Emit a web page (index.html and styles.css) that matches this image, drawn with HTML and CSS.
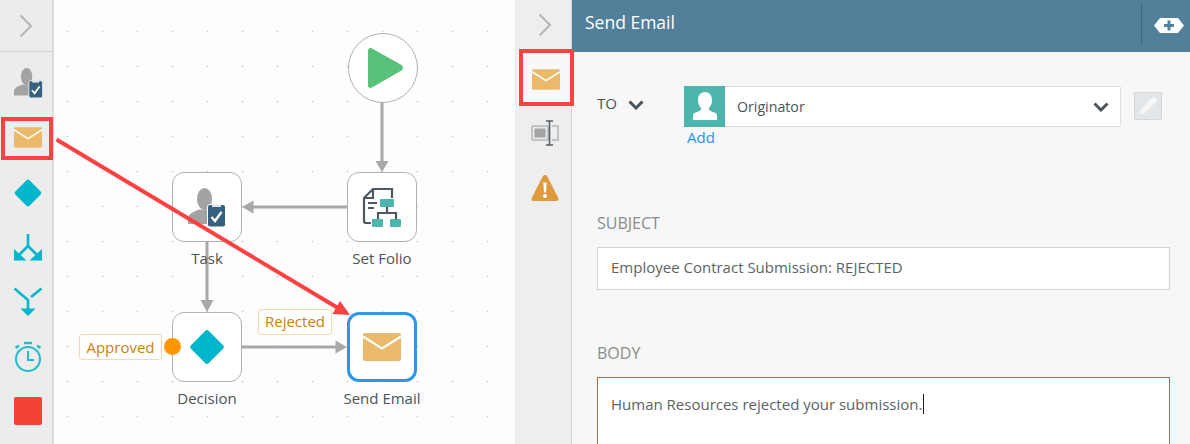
FILE: index.html
```html
<!DOCTYPE html>
<html lang="en">
<head>
<meta charset="utf-8">
<title>Send Email</title>
<link rel="stylesheet" href="styles.css">
</head>
<body>
<svg width="0" height="0" class="defs">
  <defs>
    <symbol id="mail" viewBox="0 0 38 28">
      <rect width="38" height="28" rx="2" fill="#ebb96a"/>
      <path d="M0 3.500 19 15.500 38 3.500" fill="none" stroke="#fff" stroke-width="2.200"/>
    </symbol>
    <symbol id="task" viewBox="0 0 38 39">
      <ellipse cx="16.500" cy="11" rx="7.500" ry="11" fill="#a3a3a3"/>
      <path d="M0 36v-6c0-3 4-6 11-8.500h11V36z" fill="#a3a3a3"/>
      <rect x="19.500" y="16.500" width="18" height="22.500" rx="2.500" fill="#35617f" stroke="#fff" stroke-width="1"/>
      <rect x="24" y="16.500" width="9" height="2.500" fill="#dfe6ea"/>
      <path d="M23.500 29l3.500 4 6.500-9" fill="none" stroke="#fff" stroke-width="2.400"/>
    </symbol>
    <symbol id="diamond" viewBox="0 0 36 36">
      <rect x="6" y="6" width="24" height="24" rx="2.500" transform="rotate(45 18 18)" fill="#00b6cb"/>
    </symbol>
  </defs>
</svg>
<div class="app">
  <aside class="rail rail-left">
    <div class="rail-head"><svg class="chev" width="14" height="24" viewBox="0 0 14 24"><path d="M1.500 1.500 12 12 1.500 22.500" fill="none" stroke="#b5b5b5" stroke-width="2"/></svg></div>
    <div class="rail-items">
      <div class="tool"><svg width="29" height="30"><use href="#task"/></svg></div>
      <div class="tool"><svg width="28" height="21"><use href="#mail"/></svg></div>
      <div class="tool"><svg width="30" height="30"><use href="#diamond"/></svg></div>
      <div class="tool"><svg width="30" height="30" viewBox="0 0 30 30"><g fill="none" stroke="#00b6cb" stroke-width="2.600"><path d="M15 2v12L6 23"/><path d="M15 14l9.500 9.500"/></g><g fill="#00b6cb"><path d="M1 17v11.500h12.500z"/><path d="M29 17v11.500H16.500z"/></g></svg></div>
      <div class="tool"><svg width="30" height="30" viewBox="0 0 30 30"><g fill="none" stroke="#00b6cb" stroke-width="2.600"><path d="M1.500 1.500 15 13v10"/><path d="M28.500 1.500 18 10"/></g><path d="M7.500 21.500h15L15 29z" fill="#00b6cb"/></svg></div>
      <div class="tool"><svg width="30" height="32" viewBox="0 0 30 32"><g fill="none" stroke="#21bccd" stroke-width="2"><circle cx="15" cy="18" r="12"/><path d="M15 10v9h6"/><path d="M11 2h8" stroke-width="2.400"/><path d="M2.500 7 6 4.500M27.500 7 24 4.500" stroke-width="2.400"/></g></svg></div>
      <div class="tool"><span class="stop"></span></div>
    </div>
  </aside>

  <main class="canvas">
    <svg class="wires" width="461" height="444" viewBox="54 0 461 444">
      <g stroke="#a8a8a8" stroke-width="3" fill="none">
        <path d="M382 101v60"/>
        <path d="M347 207H253"/>
        <path d="M207 242v60"/>
        <path d="M242 347h94"/>
      </g>
      <g fill="#a8a8a8">
        <path d="M375.500 161h13L382 172z"/>
        <path d="M242 207l11.500-6.500v13z"/>
        <path d="M200.500 300h13L207 312z"/>
        <path d="M347 347l-11.500-6.500v13z"/>
      </g>
    </svg>

    <div class="node start"><svg width="36" height="42" viewBox="0 0 36 42"><path d="M4 1.500 33.500 18c2 1.300 2 4.300 0 5.600L4 40.500c-2 1-4 0-4-2.500V4c0-2.500 2-3.500 4-2.500z" fill="#58c27d"/></svg></div>

    <div class="node box folio">
      <svg width="40" height="41" viewBox="0 0 40 41">
        <g fill="none" stroke="#4e5a60" stroke-width="2.200">
          <path d="M30 11V2H11L2 11v23q0 2 2 2h5"/><path d="M11 2v9H2"/>
          <path d="M6 16h9M6 21h6"/>
          <path d="M25 20v6M16 32v-6h18v6"/>
        </g>
        <g fill="#4db6ac"><rect x="18" y="12" width="14" height="8" rx="1"/><rect x="10" y="32" width="11" height="8" rx="1"/><rect x="28" y="32" width="11" height="8" rx="1"/></g>
      </svg>
    </div>
    <span class="node-label l-folio">Set Folio</span>

    <div class="node box task"><svg width="38" height="39"><use href="#task"/></svg></div>
    <span class="node-label l-task">Task</span>

    <div class="node box decision"><svg width="38" height="38"><use href="#diamond"/></svg></div>
    <span class="node-label l-decision">Decision</span>
    <span class="dot"></span>
    <span class="tag tag-approved">Approved</span>
    <span class="tag tag-rejected">Rejected</span>

    <div class="node box email"><svg width="38" height="28"><use href="#mail"/></svg></div>
    <span class="node-label l-email">Send Email</span>
  </main>

  <aside class="rail rail-mid">
    <div class="rail-head-mid"><svg width="14" height="24" viewBox="0 0 14 24"><path d="M1.500 1.500 12 12 1.500 22.500" fill="none" stroke="#b5b5b5" stroke-width="2"/></svg></div>
    <div class="mid-tool mid-mail"><svg width="28" height="21"><use href="#mail"/></svg></div>
    <div class="mid-tool mid-text"><svg width="28" height="26" viewBox="0 0 28 26"><rect x="1" y="6" width="16" height="14" rx="1" fill="#e8e8e8" stroke="#b5b5b5" stroke-width="1.500"/><rect x="3.500" y="8.500" width="11" height="9" fill="#a3a3a3"/><path d="M21 6h6v14h-6" fill="none" stroke="#b5b5b5" stroke-width="1.500"/><path d="M18.500 1v24M15 1h7M15 25h7" stroke="#555f65" stroke-width="1.600" fill="none"/></svg></div>
    <div class="mid-tool mid-warn"><svg width="28" height="29" viewBox="0 0 28 28"><path d="M14 1.500c1 0 1.800.5 2.300 1.500l11 21.500c.7 1.500-.2 3-1.800 3H2.500c-1.600 0-2.500-1.500-1.800-3L11.700 3c.5-1 1.300-1.500 2.300-1.500z" fill="#e09a3e"/><path d="M12.300 9h3.400l-.7 10h-2z" fill="#fff"/><circle cx="14" cy="22.500" r="2" fill="#fff"/></svg></div>
  </aside>

  <section class="panel">
    <header class="panel-head">
      <h1 class="panel-title">Send Email</h1>
      <div class="head-action">
        <svg width="30" height="15" viewBox="0 0 30 15"><path d="M6 0h18l6 7.500L24 15H6L0 7.500z" fill="#fff"/><path d="M15 2.500v10M10 7.500h10" stroke="#527f9a" stroke-width="3"/></svg>
      </div>
    </header>
    <div class="panel-body">
      <div class="to-row">
        <div class="to-label"><span>TO</span><svg class="to-caret" width="16" height="10" viewBox="0 0 16 10"><path d="M1.500 1.500 8 8l6.500-6.500" fill="none" stroke="#4b535b" stroke-width="3"/></svg></div>
        <div class="to-field">
          <div class="select">
            <span class="avatar"><svg width="24" height="30" viewBox="0 0 24 30"><path d="M12 0c4.500 0 7 3.500 7 8.500 0 3.500-1.500 6-3 7.500v1.500c0 1 4 2.500 6.500 3.500 1 .5 1.500 1.500 1.500 2.500V28H0v-4.500c0-1 .5-2 1.500-2.500C4 20 8 18.500 8 17.500V16c-1.500-1.500-3-4-3-7.500C5 3.500 7.500 0 12 0z" fill="#fff"/></svg></span>
            <span class="select-value">Originator</span>
            <svg class="select-caret" width="16" height="10" viewBox="0 0 16 10"><path d="M1.500 1.500 8 8l6.500-6.500" fill="none" stroke="#4b535b" stroke-width="3"/></svg>
          </div>
          <a class="add">Add</a>
        </div>
        <span class="edit"><svg width="20" height="20" viewBox="0 0 20 20"><path d="M2 18l1-5L14 2c1-1 2-1 3 0l1 1c1 1 1 2 0 3L7 17z" fill="#f7f7f7"/></svg></span>
      </div>
      <h2 class="field-label subject-label">SUBJECT</h2>
      <div class="input">Employee Contract Submission: REJECTED</div>
      <h2 class="field-label body-label">BODY</h2>
      <div class="input textarea"><span class="typed">Human Resources rejected your submission.</span></div>
    </div>
  </section>

  <svg class="annot" width="1190" height="444" viewBox="0 0 1190 444">
    <rect x="3" y="119" width="48" height="39" fill="none" stroke="#fb4141" stroke-width="4"/>
    <rect x="521" y="51" width="51" height="53" fill="none" stroke="#fb4141" stroke-width="4"/>
    <path d="M56.500 139.500 338 308" stroke="#fb4141" stroke-width="4" fill="none"/>
    <path d="M350 315l-17.500-1 7.500-13z" fill="#fb4141"/>
  </svg>
</div>
</body>
</html>
```
FILE: styles.css
```css
* { box-sizing: border-box; }
html, body { margin: 0; padding: 0; }
body {
  width: 1190px;
  height: 444px;
  overflow: hidden;
  background: #f7f7f7;
  font-family: "Open Sans", sans-serif;
  color: #4b5459;
}
.defs { position: absolute; }
.app { position: relative; display: flex; width: 1190px; height: 444px; overflow: hidden; }

.rail { flex: none; background: #ececec; }
.rail-left { width: 54px; border-right: 2px solid #dcdcdc; display: flex; flex-direction: column; }
.rail-head {
  height: 52px;
  border-bottom: 1px solid #d2d2d2;
  display: flex;
  align-items: center;
  justify-content: center;
  padding-right: 1px;
}
.rail-items { display: flex; flex-direction: column; padding-top: 4px; }
.tool { height: 54.670px; padding-left: 4px; display: flex; align-items: center; justify-content: center; }
.stop { width: 28px; height: 28px; border-radius: 2px; background: #f44336; }

.canvas {
  position: relative;
  flex: none;
  width: 461px;
  height: 444px;
  background-color: #fdfdfd;
  background-image: radial-gradient(circle at center, #c4c4c4 0, #c4c4c4 .7px, transparent 1.100px);
  background-size: 35px 35px;
  background-position: -4px 14px;
}
.wires { position: absolute; left: 0; top: 0; }
.node { position: absolute; display: flex; align-items: center; justify-content: center; background: #fff; }
.box { width: 70px; height: 70px; border: 1.500px solid #b0b0b0; border-radius: 12px; }
.start { left: 293.500px; top: 32.500px; width: 70px; height: 70px; border: 1.500px solid #b0b0b0; border-radius: 50%; padding-left: 6px; }
.folio { left: 293px; top: 172px; }
.task { left: 118px; top: 172px; }
.decision { left: 118px; top: 312px; }
.email { left: 293px; top: 312px; border: 3px solid #2c97f0; }
.node-label {
  position: absolute;
  width: 100px;
  text-align: center;
  font-size: 15px;
  line-height: 20px;
  color: #4b5459;
}
.l-folio { left: 278px; top: 248px; }
.l-task { left: 103px; top: 248px; }
.l-decision { left: 103px; top: 388px; }
.l-email { left: 278px; top: 388px; }
.dot { position: absolute; left: 110px; top: 338px; width: 17px; height: 17px; border-radius: 50%; background: #ff9800; }
.tag {
  position: absolute;
  height: 26px;
  border: 1px solid #fbd9a7;
  border-radius: 3px;
  background: #fff;
  color: #cc7f0a;
  font-size: 15px;
  line-height: 24px;
  text-align: center;
}
.tag-approved { left: 25px; top: 334px; width: 83px; }
.tag-rejected { left: 204px; top: 309px; width: 74px; line-height: 23px; }

.rail-mid {
  width: 57px;
  background: #eeeeee;
  border-right: 1px solid #d6d6d6;
  display: flex;
  flex-direction: column;
  align-items: center;
  padding-left: 3px;
}
.rail-head-mid { height: 49px; display: flex; align-items: center; justify-content: center; }
.mid-tool { width: 100%; display: flex; align-items: center; justify-content: center; flex: none; }
.mid-mail { height: 57px; background: #f8f8f8; padding: 3px 0 0 3px; }
.mid-text { height: 50px; padding-top: 4px; }
.mid-warn { height: 60px; padding-top: 2px; }

.panel { flex: 1; min-width: 0; background: #f7f7f7; }
.panel-head {
  height: 52px;
  background: #527f9a;
  display: flex;
  align-items: center;
  justify-content: space-between;
  padding-left: 13px;
}
.panel-title { margin: 0 0 8px; font-size: 17.500px; font-weight: 400; color: #fff; line-height: 24px; }
.head-action {
  height: 42px;
  width: 49px;
  margin-bottom: 4px;
  border-left: 1px solid #3b6780;
  display: flex;
  align-items: center;
  justify-content: flex-start;
  padding-left: 12px;
  padding-top: 2px;
}
.panel-body { padding: 34px 20px 0 25px; }
.to-row { display: flex; align-items: flex-start; height: 60px; }
.to-label { width: 87px; flex: none; display: flex; align-items: center; gap: 11px; font-size: 15px; height: 34px; color: #4b5459; }
.to-caret { margin-top: 4px; }
.to-field { width: 437px; flex: none; }
.select {
  height: 41px;
  background: #fff;
  border: 1px solid #dedede;
  border-left: 0;
  border-radius: 2px;
  display: flex;
  align-items: center;
  padding-right: 11px;
}
.avatar { width: 41px; height: 41px; background: #4db6ac; display: flex; align-items: center; justify-content: center; flex: none; }
.select-value { flex: 1; font-size: 14.200px; padding-left: 12px; color: #4b5459; }
.add { display: block; font-size: 15px; line-height: 20px; color: #2196f3; padding-left: 3px; }
.edit {
  margin: 6px 0 0 13px;
  width: 28px;
  height: 28px;
  background: #e3e6e8;
  border: 1px solid #d6d8da;
  display: flex;
  align-items: center;
  justify-content: center;
}
.field-label { margin: 0; font-weight: 400; font-size: 16px; line-height: 22px; color: #868e8e; }
.subject-label { margin-top: 66px; }
.input {
  margin-top: 13px;
  height: 43px;
  background: #fff;
  border: 1px solid #d2d2d2;
  font-size: 15px;
  line-height: 38px;
  padding-left: 13px;
  color: #5a6368;
}
.body-label { margin-top: 52px; }
.textarea { height: 120px; line-height: 52px; border-color: #2d8fdc; }
.typed { border-right: 1px solid #222; padding-right: 1px; }
.annot { position: absolute; left: 0; top: 0; pointer-events: none; }
```
